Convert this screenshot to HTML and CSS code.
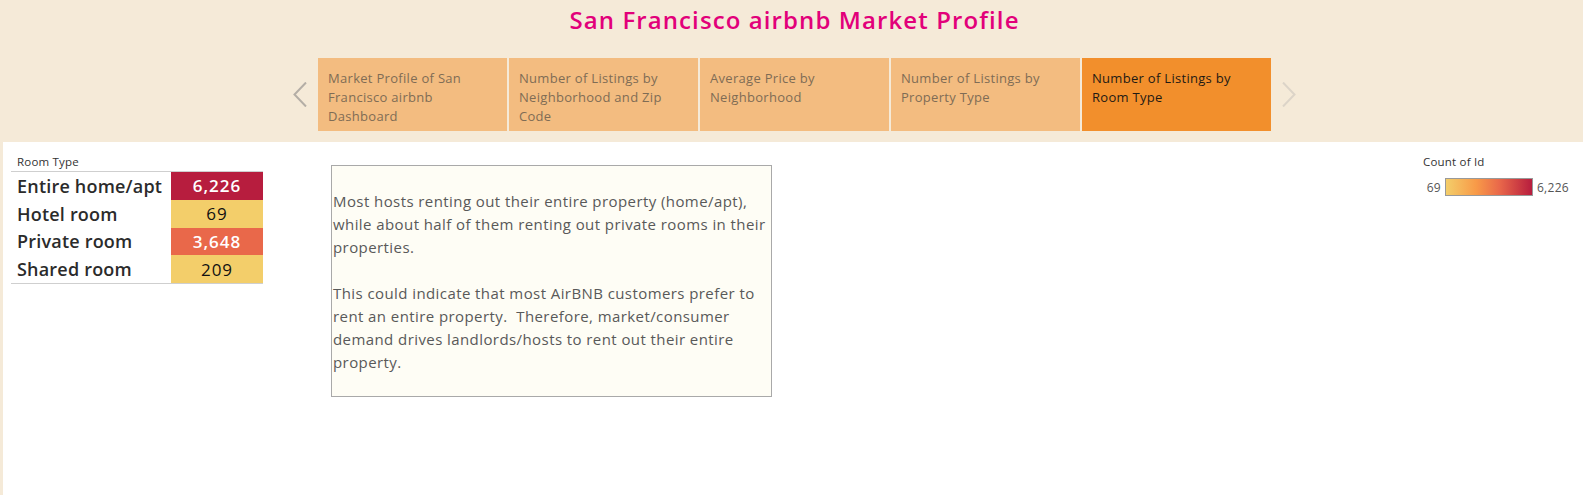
FILE: index.html
```html
<!DOCTYPE html>
<html>
<head>
<meta charset="utf-8">
<link rel="stylesheet" href="styles.css">
</head>
<body>
<header class="header">
  <h1 class="title">San Francisco airbnb Market Profile</h1>
  <nav class="tabs">
    <span class="chev chev-prev"><svg width="14" height="25" viewBox="0 0 14 25"><polyline points="13,0.5 1.5,12.5 13,24.5" fill="none" stroke="#b4aea6" stroke-width="2"/></svg></span>
    <div class="tab">Market Profile of San Francisco airbnb Dashboard</div>
    <div class="tab">Number of Listings by Neighborhood and Zip Code</div>
    <div class="tab">Average Price by Neighborhood</div>
    <div class="tab">Number of Listings by Property Type</div>
    <div class="tab tab-active">Number of Listings by Room Type</div>
    <span class="chev chev-next"><svg width="14" height="25" viewBox="0 0 14 25"><polyline points="1,0.5 12.5,12.5 1,24.5" fill="none" stroke="#dcd4c8" stroke-width="2"/></svg></span>
  </nav>
</header>
<main class="main">
  <section class="room-panel">
    <div class="room-label">Room Type</div>
    <div class="room-table">
      <div class="room-row"><span class="room-name">Entire home/apt</span><span class="room-val val-high">6,226</span></div>
      <div class="room-row"><span class="room-name">Hotel room</span><span class="room-val val-low">69</span></div>
      <div class="room-row"><span class="room-name">Private room</span><span class="room-val val-mid">3,648</span></div>
      <div class="room-row"><span class="room-name">Shared room</span><span class="room-val val-low">209</span></div>
    </div>
  </section>
  <section class="note">
    <p>Most hosts renting out their entire property (home/apt),<br>while about half of them renting out private rooms in their<br>properties.</p>
    <p>This could indicate that most AirBNB customers prefer to<br>rent an entire property.&nbsp; Therefore, market/consumer<br>demand drives landlords/hosts to rent out their entire<br>property.</p>
  </section>
  <section class="legend">
    <div class="legend-title">Count of Id</div>
    <div class="legend-scale">
      <span class="legend-min">69</span>
      <span class="legend-bar"></span>
      <span class="legend-max">6,226</span>
    </div>
  </section>
</main>
</body>
</html>
```
FILE: styles.css
```css
html, body {
  margin: 0;
  padding: 0;
}
body {
  background: #f5ead8;
  font-family: "Open Sans", Lato, sans-serif;
  width: 1583px;
  height: 495px;
  overflow: hidden;
  display: flex;
  flex-direction: column;
}
.header {
  height: 142px;
  padding-left: 6px;
  box-sizing: border-box;
}
.title {
  margin: 0;
  padding-top: 4px;
  height: 34px;
  text-align: center;
  font-size: 24px;
  line-height: 32px;
  font-weight: 600;
  color: #e2007a;
  letter-spacing: 1.1px;
}
.tabs {
  margin-top: 20px;
  display: flex;
  justify-content: center;
  align-items: center;
  gap: 2px;
}
.chev {
  display: flex;
  width: 14px;
  height: 25px;
}
.chev-prev { margin-right: 9px; }
.chev-next { margin-left: 9px; }
.tab {
  width: 189px;
  height: 73px;
  box-sizing: border-box;
  padding: 11px 26px 0 10px;
  background: #f3bc80;
  color: #7f6c55;
  font-size: 13px;
  line-height: 19px;
  letter-spacing: 0.3px;
}
.tab-active {
  background: #f28f2c;
  color: #1f1a14;
}
.main {
  flex: 1;
  margin-left: 3px;
  background: #ffffff;
  display: flex;
  align-items: flex-start;
}
.room-panel {
  margin-left: 8px;
  padding-top: 13px;
  width: 252px;
}
.room-label {
  padding-left: 6px;
  font-size: 11.5px;
  line-height: 14px;
  color: #333333;
  height: 16px;
  letter-spacing: 0.2px;
}
.room-table {
  border-top: 1px solid #cfcfcf;
  border-bottom: 1px solid #cfcfcf;
}
.room-row {
  display: flex;
  height: 27.75px;
  align-items: stretch;
}
.room-name {
  flex: 1;
  padding-left: 6px;
  font-size: 18px;
  font-weight: 600;
  color: #2b2b2b;
  display: flex;
  align-items: center;
  letter-spacing: 0.2px;
}
.room-val {
  width: 92px;
  display: flex;
  align-items: center;
  justify-content: center;
  font-size: 17px;
  color: #111111;
  letter-spacing: 1px;
}
.val-high { background: #b71d3e; color: #ffffff; font-weight: 600; }
.val-mid { background: #e9684a; color: #ffffff; font-weight: 600; }
.val-low { background: #f3ce6a; }
.note {
  margin-left: 68px;
  margin-top: 23px;
  width: 441px;
  height: 232px;
  box-sizing: border-box;
  border: 1px solid #a9a9a9;
  background: #fefdf5;
  padding: 24px 0 0 1px;
  color: #595959;
  font-size: 15px;
  line-height: 23px;
  white-space: nowrap;
  letter-spacing: 0.42px;
}
.note p {
  margin: 0 0 23px 0;
}
.legend {
  margin-left: auto;
  margin-right: 14px;
  padding-top: 13px;
  width: 146px;
}
.legend-title {
  font-size: 11.5px;
  line-height: 14px;
  color: #333333;
  height: 23px;
  letter-spacing: 0.2px;
}
.legend-scale {
  display: flex;
  align-items: center;
  gap: 4px;
  font-size: 12px;
  color: #555555;
  letter-spacing: 0.3px;
}
.legend-min {
  width: 18px;
  text-align: right;
}
.legend-bar {
  width: 88px;
  height: 18px;
  box-sizing: border-box;
  border: 1px solid #999999;
  background: linear-gradient(to right, #f3ce6a 0%, #f89a48 35%, #e9684a 62%, #b71d3e 100%);
}
```
